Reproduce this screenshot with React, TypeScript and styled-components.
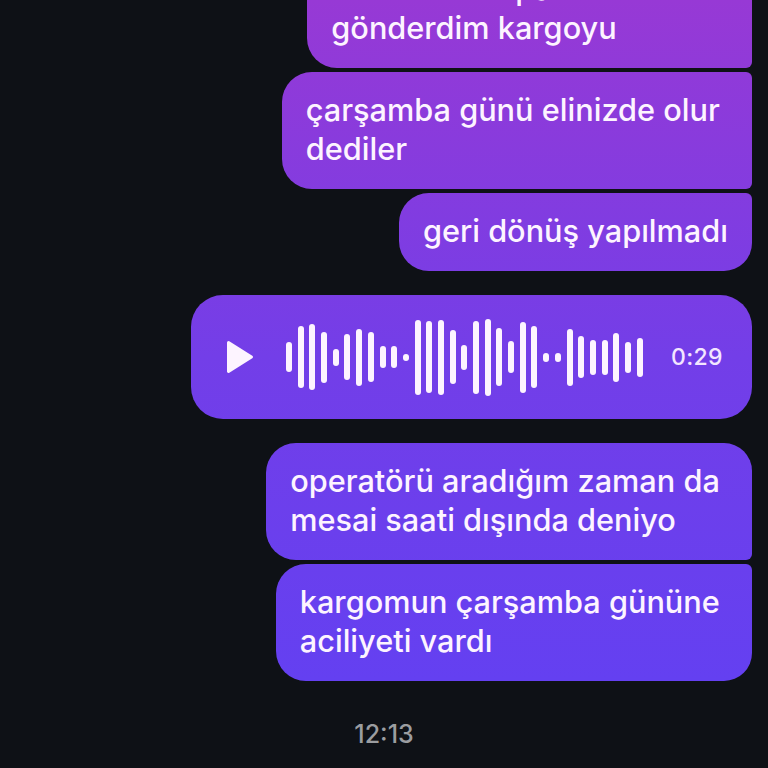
import React from "react";
import styled, { createGlobalStyle } from "styled-components";

const Global = createGlobalStyle`
  html, body { margin: 0; padding: 0; background: #0e1116; }
`;

const Screen = styled.div`
  width: 768px;
  height: 768px;
  overflow: hidden;
  background: #0e1116;
  display: flex;
  flex-direction: column;
  justify-content: flex-end;
  align-items: flex-end;
  padding: 0 16px 20px;
  box-sizing: border-box;
  font-family: Inter, "Liberation Sans", sans-serif;
`;

const Group = styled.div`
  display: flex;
  flex-direction: column;
  align-items: flex-end;
  gap: 4px;
  flex-shrink: 0;
  margin-bottom: ${(p: { $after: number }) => p.$after}px;
`;

const Bubble = styled.div<{ $tr: number; $br: number }>`
  flex-shrink: 0;
  padding: 18px 24px 21px;
  font-size: 30.7px;
  line-height: 39px;
  font-weight: 500;
  color: #fdf4ff;
  white-space: pre;
  border-radius: 30px ${(p) => p.$tr}px ${(p) => p.$br}px 30px;
  background: linear-gradient(180deg, #9739d5 0px, #733ee8 357px, #6440f1 680px) fixed;
`;

const Voice = styled.div`
  display: flex;
  align-items: center;
  flex-shrink: 0;
  width: 561px;
  height: 124px;
  box-sizing: border-box;
  padding: 0 29px 0 35px;
  border-radius: 32px;
  background: linear-gradient(180deg, #9739d5 0px, #733ee8 357px, #6440f1 680px) fixed;
`;

const Wave = styled.div`
  display: flex;
  align-items: center;
  gap: 5.69px;
  margin-left: 32px;
  flex: 1;
`;

const Bar = styled.span`
  display: block;
  width: 6px;
  border-radius: 3px;
  background: #fdf4ff;
`;

const Duration = styled.span`
  font-size: 23px;
  font-weight: 500;
  color: #f3e6ff;
  letter-spacing: 0.4px;
`;

const Time = styled.div`
  align-self: center;
  font-size: 25px;
  line-height: 28px;
  font-weight: 500;
  color: #9b9da0;
  flex-shrink: 0;
`;

const heights = [30, 62, 66, 51, 17, 46, 57, 50, 22, 22, 7, 75, 72, 75, 54, 25, 73, 77, 58, 32, 71, 62, 9, 9, 57, 42, 35, 35, 49, 31, 39];

export default function App() {
  return (
    <Screen>
      <Global />
      <Group $after={24}>
        <Bubble $tr={6} $br={6}>{"ürün hemen paketledim ve \ngönderdim kargoyu"}</Bubble>
        <Bubble $tr={6} $br={6}>{"çarşamba günü elinizde olur \ndediler"}</Bubble>
        <Bubble $tr={6} $br={28}>geri dönüş yapılmadı</Bubble>
      </Group>
      <Group $after={24}>
        <Voice>
          <svg width="28" height="34" viewBox="0 0 28 34" aria-hidden="true">
            <path d="M2.5 2.5 L25.5 17 L2.5 31.5 Z" fill="#fdf4ff" stroke="#fdf4ff" strokeWidth="3" strokeLinejoin="round" />
          </svg>
          <Wave>
            {heights.map((h, i) => (
              <Bar key={i} style={{ height: h }} />
            ))}
          </Wave>
          <Duration>0:29</Duration>
        </Voice>
      </Group>
      <Group $after={39}>
        <Bubble $tr={28} $br={6}>{"operatörü aradığım zaman da \nmesai saati dışında deniyo"}</Bubble>
        <Bubble $tr={6} $br={28}>{"kargomun çarşamba gününe \naciliyeti vardı"}</Bubble>
      </Group>
      <Time>12:13</Time>
    </Screen>
  );
}
